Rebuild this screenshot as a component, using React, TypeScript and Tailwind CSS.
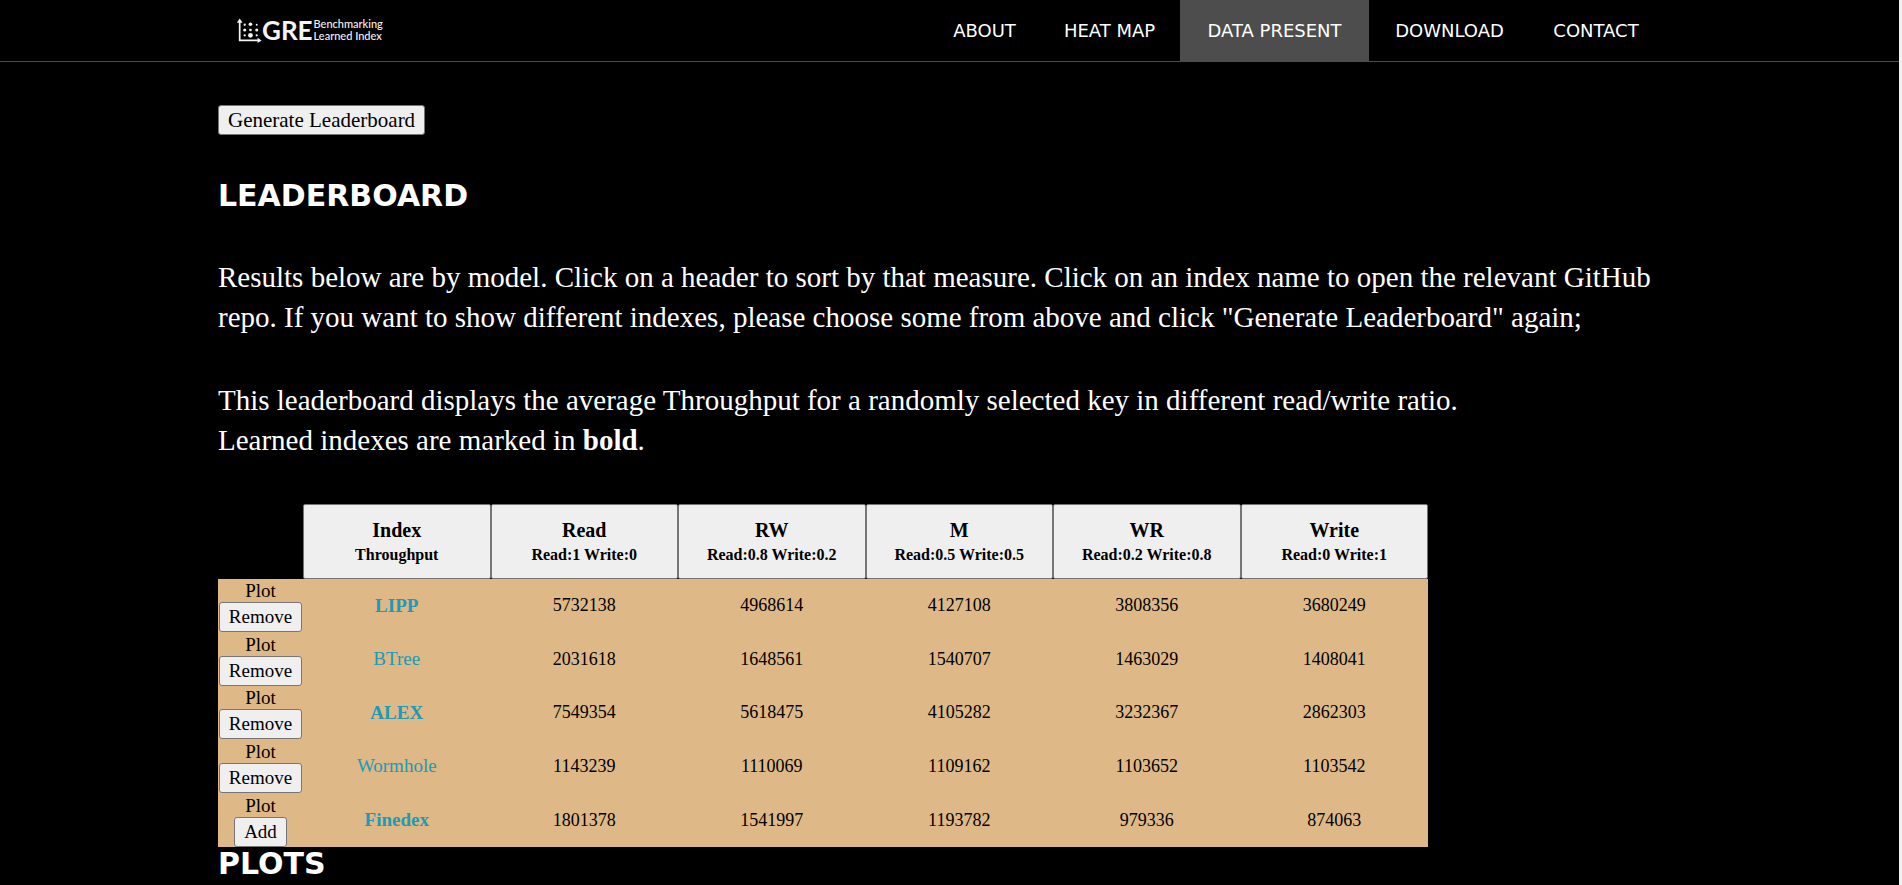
import React from "react";

const navItems = [
  { label: "ABOUT", href: "#about", width: "w-[109px]", active: false },
  { label: "HEAT MAP", href: "#heatmap", width: "w-[141px]", active: false },
  { label: "DATA PRESENT", href: "#data", width: "w-[189px]", active: true },
  { label: "DOWNLOAD", href: "#download", width: "w-[161px]", active: false },
  { label: "CONTACT", href: "#contact", width: "w-[132px]", active: false },
];

const columns = [
  { name: "Index", detail: "Throughput" },
  { name: "Read", detail: "Read:1 Write:0" },
  { name: "RW", detail: "Read:0.8 Write:0.2" },
  { name: "M", detail: "Read:0.5 Write:0.5" },
  { name: "WR", detail: "Read:0.2 Write:0.8" },
  { name: "Write", detail: "Read:0 Write:1" },
];

const rows = [
  { name: "LIPP", learned: true, action: "Remove", values: [5732138, 4968614, 4127108, 3808356, 3680249] },
  { name: "BTree", learned: false, action: "Remove", values: [2031618, 1648561, 1540707, 1463029, 1408041] },
  { name: "ALEX", learned: true, action: "Remove", values: [7549354, 5618475, 4105282, 3232367, 2862303] },
  { name: "Wormhole", learned: false, action: "Remove", values: [1143239, 1110069, 1109162, 1103652, 1103542] },
  { name: "Finedex", learned: true, action: "Add", values: [1801378, 1541997, 1193782, 979336, 874063] },
];

function Logo() {
  return (
    <a href="#top" className="flex items-center pb-px font-['Lato',sans-serif] text-[#f4f4f4]">
      <svg width="25" height="25" viewBox="0 0 26 26" fill="currentColor" aria-hidden="true">
        <path d="M2.8 4v19.3h20" fill="none" stroke="currentColor" strokeWidth="1.8" />
        <path d="M2.8 .6L5.8 5H-.2zM25.6 23.3L21.4 26v-5.4z" />
        <circle cx="8" cy="7" r="1.2" />
        <circle cx="14" cy="6.5" r="1.9" />
        <circle cx="20.5" cy="7" r="1" />
        <circle cx="8" cy="12.5" r="1.6" />
        <circle cx="14" cy="12.5" r="1.4" />
        <circle cx="20.5" cy="12.5" r="1.6" />
        <circle cx="8" cy="18" r="1.2" />
        <circle cx="14" cy="18" r="2.5" />
        <circle cx="20.5" cy="18" r="1.2" />
      </svg>
      <span className="text-[26px] leading-8 font-bold">GRE</span>
      <span className="ml-px flex flex-col text-[11px] leading-3 font-medium">
        <span>Benchmarking</span>
        <span>Learned Index</span>
      </span>
    </a>
  );
}

function PlainButton({ size, children }: { size: "text-[19px]" | "text-[21px]"; children: React.ReactNode }) {
  return (
    <button
      type="button"
      className={`h-[30px] rounded-[3px] border border-[#767676] bg-[#efefef] px-[9px] leading-[26px] text-black ${size}`}
    >
      {children}
    </button>
  );
}

function SectionTitle({ children }: { children: React.ReactNode }) {
  return <h2 className="font-['DejaVu_Sans',sans-serif] text-[30px] leading-[34px] font-bold">{children}</h2>;
}

export default function App() {
  return (
    <div className="min-h-screen border-r-[3px] border-[#f1f1f1] bg-black font-['Liberation_Serif',serif] text-white">
      <header className="border-b border-[#4d4d4d]">
        <div className="mx-auto flex h-[61px] max-w-[1463px] items-stretch justify-between px-[19px]">
          <Logo />
          <nav className="flex font-['DejaVu_Sans',sans-serif] text-[18px]">
            {navItems.map((item) => (
              <a
                key={item.label}
                href={item.href}
                className={`flex items-center justify-center whitespace-nowrap ${item.width} ${item.active ? "bg-[#4d4d4d]" : ""}`}
              >
                {item.label}
              </a>
            ))}
          </nav>
        </div>
      </header>

      <main className="mx-auto max-w-[1463px] pt-[43px]">
        <div className="mb-[44px] flex">
          <PlainButton size="text-[21px]">Generate Leaderboard</PlainButton>
        </div>
        <SectionTitle>LEADERBOARD</SectionTitle>
        <p className="mt-[44px] text-[29px] leading-[40px]">
          Results below are by model. Click on a header to sort by that measure. Click on an index name to open the relevant GitHub repo. If you want to show different indexes, please choose some from above and click "Generate Leaderboard" again;
        </p>
        <p className="mt-[43px] text-[29px] leading-[40px]">
          This leaderboard displays the average Throughput for a randomly selected key in different read/write ratio.
          <br />
          Learned indexes are marked in <b>bold</b>.
        </p>

        <table className="mt-[44px] h-[343px] w-[1210px] table-fixed border-collapse text-center text-[19px] text-black">
          <thead>
            <tr className="h-[75px]">
              <td className="w-[85px] p-0" />
              {columns.map((column) => (
                <th key={column.name} scope="col" className="h-[75px] p-0">
                  <button
                    type="button"
                    className="flex h-[75px] w-full flex-col items-center justify-center rounded-[2px] border border-[#767676] bg-[#efefef] pt-[2px] font-bold"
                  >
                    <span className="text-[20px] leading-[25px]">{column.name}</span>
                    <span className="text-[16px] leading-[24px]">{column.detail}</span>
                  </button>
                </th>
              ))}
            </tr>
          </thead>
          <tbody className="bg-[#deb887]">
            {rows.map((row) => (
              <tr key={row.name}>
                <td className="p-0">
                  <div className="flex flex-col items-center">
                    <span className="leading-[23px]">Plot</span>
                    <PlainButton size="text-[19px]">{row.action}</PlainButton>
                  </div>
                </td>
                <td className="p-0">
                  <a href={`#${row.name}`} className={`text-[#219ab3] ${row.learned ? "font-bold" : ""}`}>
                    {row.name}
                  </a>
                </td>
                {row.values.map((value) => (
                  <td key={value} className="p-0 text-[18px]">
                    {value}
                  </td>
                ))}
              </tr>
            ))}
          </tbody>
        </table>
        <SectionTitle>PLOTS</SectionTitle>
      </main>
    </div>
  );
}
